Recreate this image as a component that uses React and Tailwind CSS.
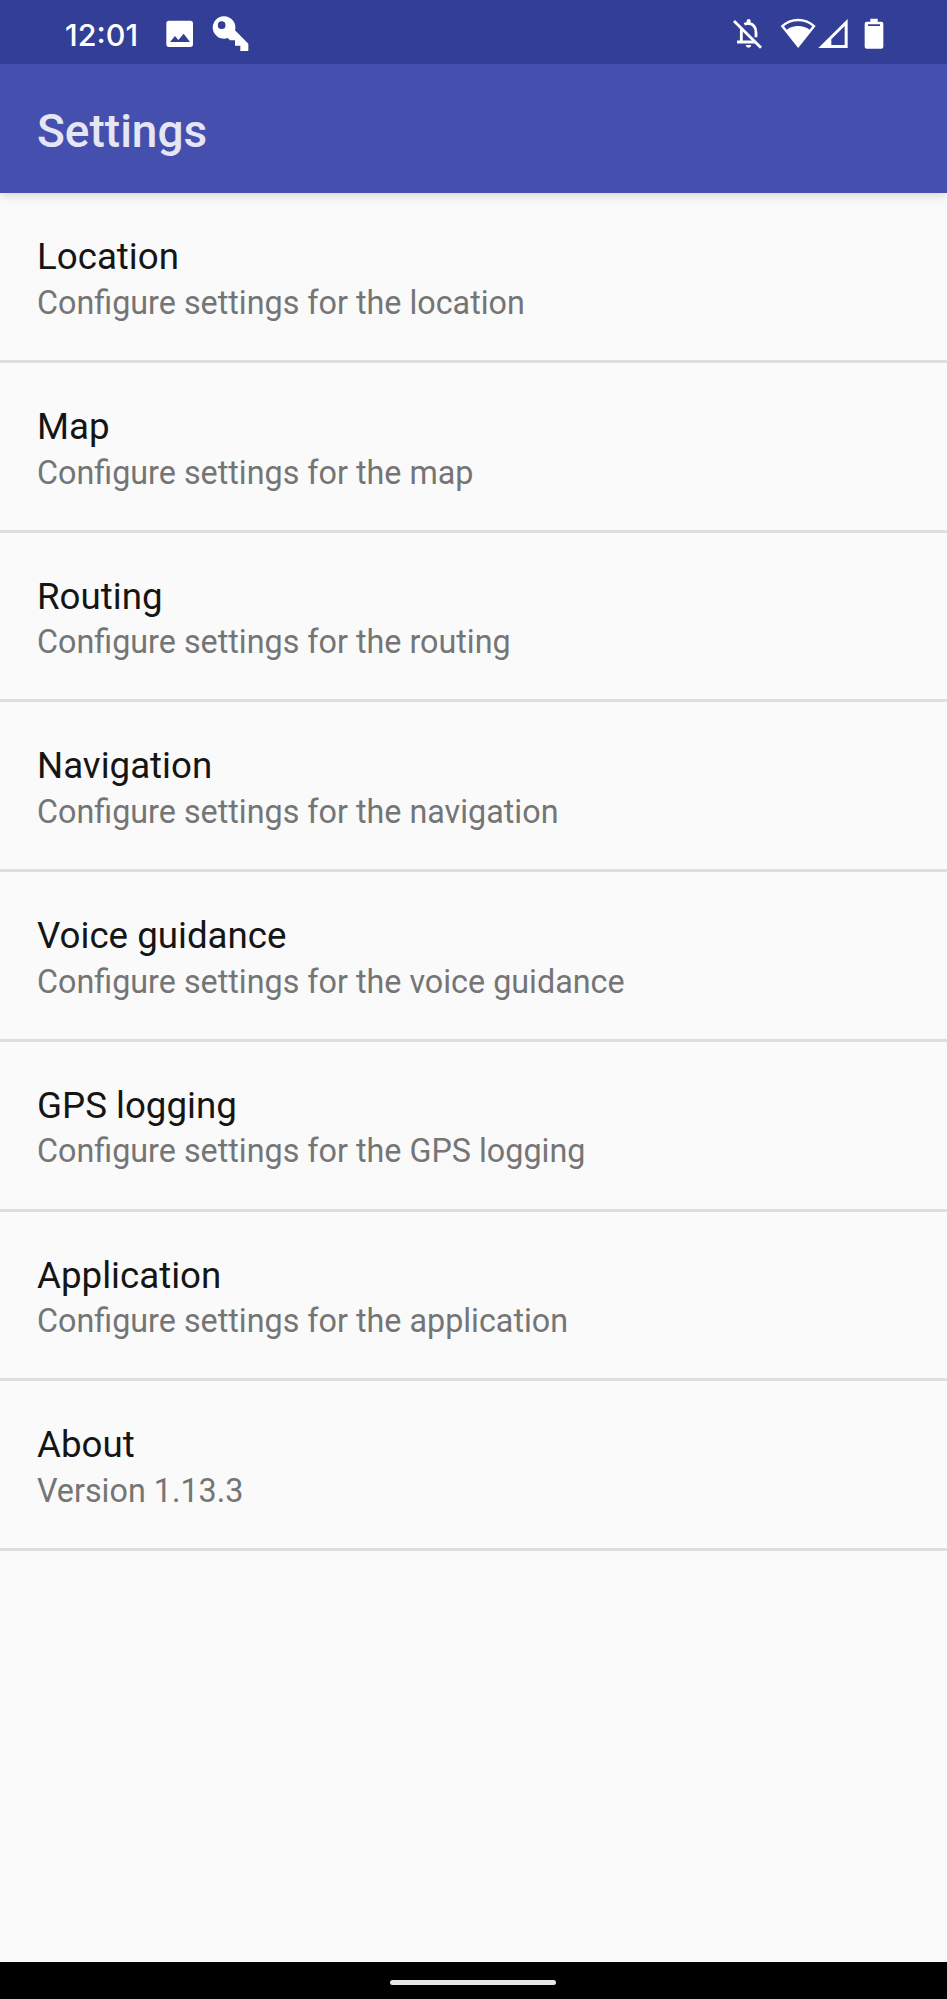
const sections = [
  ["Location", "Configure settings for the location"],
  ["Map", "Configure settings for the map"],
  ["Routing", "Configure settings for the routing"],
  ["Navigation", "Configure settings for the navigation"],
  ["Voice guidance", "Configure settings for the voice guidance"],
  ["GPS logging", "Configure settings for the GPS logging"],
  ["Application", "Configure settings for the application"],
  ["About", "Version 1.13.3"],
];

function ImageIcon() {
  return (
    <svg className="ml-[27px] mt-[20px] h-[28px] w-[28px] shrink-0" viewBox="345 60 84 84" fill="#fff">
      <path fillRule="evenodd" d="M357 62H421Q429 62 429 70V133Q429 141 421 141H357Q349 141 349 133V70Q349 62 357 62ZM360 126H420L401 101L385 120L375 108Z" />
    </svg>
  );
}

function KeyIcon() {
  return (
    <svg className="ml-[18px] mt-[15px] h-[38px] w-[38px] shrink-0" viewBox="483 45 114 114" fill="#fff">
      <path fillRule="evenodd" d="M522 49A33.500 33.500 0 0 1 555 91L595 131V153H571V137H555V121H540L533 114A33.500 33.500 0 1 1 522 49ZM515 64A11.500 11.500 0 1 0 515 87A11.500 11.500 0 1 0 515 64Z" />
    </svg>
  );
}

function MutedBellIcon() {
  return (
    <svg className="mt-[18px] h-[32px] w-[30px] shrink-0" viewBox="67 54 90 96" fill="none" stroke="#fff" strokeWidth="8.500">
      <path d="M70 63L151 143" />
      <path d="M93 84Q92 90 92 96V125M79 126H134" />
      <path d="M101 73Q107 70 114 70Q136 73 136 98V112" />
      <path d="M108 68V63Q108 57 114 57Q120 57 120 63V68ZM105 135H122Q121 143 113.500 143Q106 143 105 135Z" fill="#fff" stroke="none" />
    </svg>
  );
}

function WifiIcon() {
  return (
    <svg className="ml-[17px] mt-[17px] h-[32px] w-[36px] shrink-0" viewBox="211 51 108 96" fill="#fff">
      <path fillRule="evenodd" d="M213 78Q236 56 265.500 56Q295 56 318 78L265.500 144ZM223 79L231 89Q246 78 265.500 78Q285 78 300 89L308 79Q290 64 265.500 64Q241 64 223 79Z" />
    </svg>
  );
}

function SignalIcon() {
  return (
    <svg className="mt-[18px] ml-[2px] h-[31px] w-[30px] shrink-0" viewBox="325 54 90 93" fill="#fff">
      <path fillRule="evenodd" d="M414 57V144H326ZM405 78L365 118V135H405Z" />
    </svg>
  );
}

function BatteryIcon() {
  return (
    <svg className="ml-[16px] mt-[18px] h-[32px] w-[20px] shrink-0" viewBox="460 54 60 96" fill="#fff">
      <path fillRule="evenodd" d="M479 56H501V65H512Q518 65 518 71V140Q518 146 512 146H468Q462 146 462 140V71Q462 65 468 65H479ZM472 73V78H508V73Z" />
    </svg>
  );
}

export default function App() {
  return (
    <div className="flex h-[1999px] w-[947px] flex-col overflow-hidden bg-[#fafafa] font-['Roboto',sans-serif]">
      <header className="z-10 shrink-0 shadow-[0_2px_10px_rgba(0,0,0,0.16)]">
        <div className="flex h-16 items-start bg-[#333e96] pl-[65px] pr-[63px]">
          <span className="mt-[17px] w-[73px] whitespace-nowrap font-['Inter',sans-serif] text-[30.500px] font-medium leading-9 text-white">12:01</span>
          <ImageIcon />
          <KeyIcon />
          <div className="flex-1" />
          <MutedBellIcon />
          <WifiIcon />
          <SignalIcon />
          <BatteryIcon />
        </div>
        <div className="flex h-[129px] items-center bg-[#444fae] pl-[37px] pt-[4px]">
          <h1 className="text-[46px] font-medium leading-[54px] text-[#e5e6f4]">Settings</h1>
        </div>
      </header>
      <main className="flex-1 pt-[0.400px]">
        {sections.map(([title, summary]) => (
          <section key={title} className="h-[169.700px] border-b-[3px] border-[#dedede] pl-[37px] pt-[42px]">
            <h2 className="text-[36.700px] leading-[44px] text-[#151515]">{title}</h2>
            <p className="mt-[3.600px] text-[32.300px] leading-[40px] text-[#757575]">{summary}</p>
          </section>
        ))}
      </main>
      <footer className="flex h-[37px] shrink-0 justify-center bg-black pr-[1px] pt-[18px]">
        <div className="h-[5px] w-[166px] rounded-full bg-[#e6e6e6]" />
      </footer>
    </div>
  );
}
